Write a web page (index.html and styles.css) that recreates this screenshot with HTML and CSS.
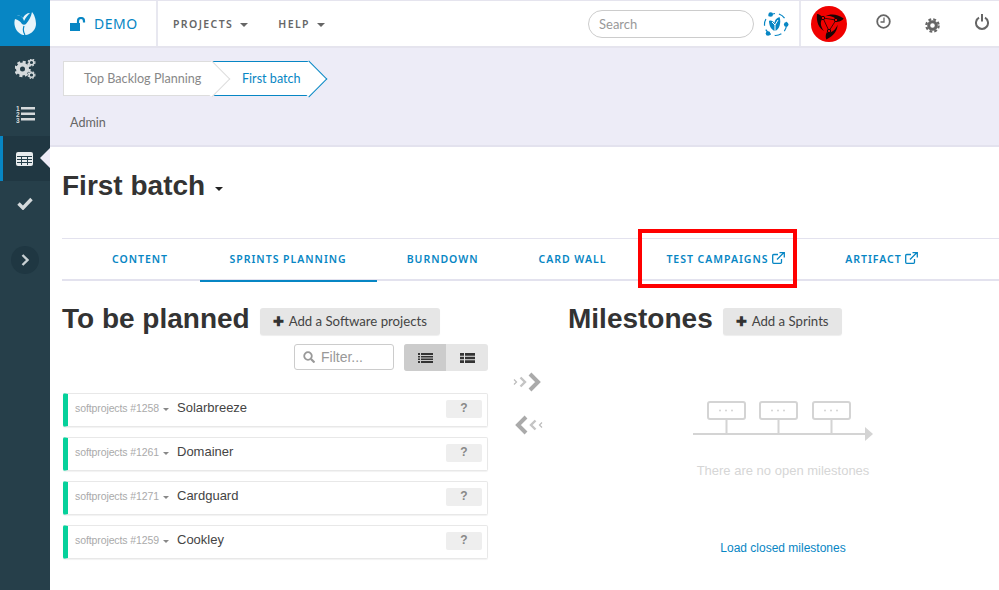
FILE: index.html
```html
<!DOCTYPE html>
<html lang="en">
<head>
<meta charset="utf-8">
<title>First batch</title>
<link rel="stylesheet" href="styles.css">
</head>
<body>
<div class="app">
  <aside class="sidebar">
    <a class="logo">
      <svg width="22" height="23" viewBox="0 0 22 23"><path fill="#e8f4fa" d="M1 7C-1 13 2 21 9 23h3c6-1 10-6 10-11 0-5-2-10-4-12-1 5-3 8-6 12-1 1-3 1-4 0C6 9 4 8 1 7z"/><path fill="#e8f4fa" d="M3 4c3-1 6 1 7 5 2-4 4-6 6-8-3 0-6 2-7 5-2-2-4-3-6-2z"/><path fill="none" stroke="#0786c4" stroke-width="1.200" d="M10 14c-1 3-1 6 1 9"/></svg>
    </a>
    <a class="side-item">
      <svg width="21" height="20" viewBox="0 0 21 20"><circle class="g-ring" cx="7.500" cy="10" r="4.500" stroke-width="4"/><circle class="g-teeth" cx="7.500" cy="10" r="7" stroke-width="2.500" stroke-dasharray="3 2.500"/><circle class="g-ring" cx="16.500" cy="3.500" r="2.300" stroke-width="1.400"/><circle class="g-teeth" cx="16.500" cy="3.500" r="3.400" stroke-width="1.200" stroke-dasharray="1.600 1.200"/><circle class="g-ring" cx="16.500" cy="16" r="2.300" stroke-width="1.400"/><circle class="g-teeth" cx="16.500" cy="16" r="3.400" stroke-width="1.200" stroke-dasharray="1.600 1.200"/></svg>
    </a>
    <a class="side-item">
      <svg width="19" height="18" viewBox="0 0 19 18"><path fill="#d5dadc" d="M5 2h14v2.600H5zM5 7.500h14v2.600H5zM5 13h14v2.600H5z"/><text class="num" x="0" y="5.500">1</text><text class="num" x="0" y="11.500">2</text><text class="num" x="0" y="17.500">3</text></svg>
    </a>
    <a class="side-item side-active">
      <svg width="17" height="14" viewBox="0 0 17 14"><rect width="17" height="14" rx="2" fill="#e8ecee"/><path fill="none" stroke="#26404b" stroke-width="1" d="M1 4.500h15M1 7.500h15M1 10.500h15M5.500 4.500v8.500M11.500 4.500v8.500"/></svg>
    </a>
    <a class="side-item">
      <svg width="16" height="13" viewBox="0 0 16 13"><path fill="none" stroke="#d5dadc" stroke-width="3.400" d="M1.500 6.500l4.500 4.500 8.500-9"/></svg>
    </a>
    <a class="side-expand">
      <svg width="8" height="12" viewBox="0 0 8 12"><path fill="none" stroke="#c8d0d3" stroke-width="2.400" d="M1.500 1l5 5-5 5"/></svg>
    </a>
  </aside>
  <div class="main">
    <header class="topbar">
      <a class="brand">
        <svg width="16" height="14" viewBox="0 0 16 14"><path fill="#0786c4" d="M0 6h10v8H0z"/><path fill="none" stroke="#0786c4" stroke-width="2.200" d="M8 6V4a3 3 0 0 1 6 0v1.500"/></svg>
        <span>DEMO</span>
      </a>
      <nav class="topnav">
        <a>PROJECTS <i class="caret"></i></a>
        <a>HELP <i class="caret"></i></a>
      </nav>
      <div class="top-right">
        <div class="search">Search</div>
        <svg class="planet" width="27" height="27" viewBox="0 0 27 27"><circle cx="13.500" cy="13.500" r="11" fill="none" stroke="#0786c4" stroke-width="1.200" stroke-dasharray="7 4"/><circle cx="8.700" cy="3.500" r="2.300" fill="#0786c4"/><circle cx="24.200" cy="13.500" r="2.300" fill="#0786c4"/><circle cx="6" cy="22.500" r="2.300" fill="#0786c4"/><path fill="#0786c4" d="M7 10c2-1 4 0 5.500 2 0-3 2-5 5-6 2 5 0 13-4.500 14C9 19 7 14 7 10z"/><path stroke="#fff" stroke-width="1" fill="none" d="M13 20v-6M10 11c1 1 2 2 3 3M16 9l-3 5"/></svg>
        <div class="top-divider"><svg width="36" height="36" viewBox="0 0 36 36"><circle cx="18" cy="18" r="18" fill="#f00100"/><g fill="#1a0505"><path d="M12 12C9 15 9 20 13 25 8 22 5 16 6 8c2 0 5 2 6 4z"/><path transform="rotate(120 18 18)" d="M12 12C9 15 9 20 13 25 8 22 5 16 6 8c2 0 5 2 6 4z"/><path transform="rotate(240 18 18)" d="M12 12C9 15 9 20 13 25 8 22 5 16 6 8c2 0 5 2 6 4z"/></g><path fill="none" stroke="#1a0505" stroke-width="0.800" d="M12 12l13 2-7 11z"/><circle cx="12" cy="12" r="1.700" fill="#f00100" stroke="#1a0505"/><circle cx="25" cy="14" r="1.700" fill="#f00100" stroke="#1a0505"/><circle cx="18" cy="25" r="1.700" fill="#f00100" stroke="#1a0505"/></svg></div>
        <svg class="ic-clock" width="15" height="15" viewBox="0 0 15 15"><circle cx="7.500" cy="7.500" r="6.300" fill="none" stroke="#666" stroke-width="1.800"/><path fill="none" stroke="#666" stroke-width="1.300" d="M8 3.500V8H4.500"/></svg>
        <svg class="ic-gear" width="15" height="15" viewBox="0 0 15 15"><circle cx="7.500" cy="7.500" r="3.800" fill="none" stroke="#666" stroke-width="3"/><circle cx="7.500" cy="7.500" r="6.200" fill="none" stroke="#666" stroke-width="2.200" stroke-dasharray="2.800 2.070"/></svg>
        <svg class="ic-power" width="14" height="16" viewBox="0 0 14 16"><path fill="none" stroke="#666" stroke-width="2" d="M4 3.700a6 6 0 1 0 6 0"/><path fill="none" stroke="#666" stroke-width="2" d="M7 0v7.500"/></svg>
      </div>
    </header>
    <section class="band">
      <div class="crumbs">
        <a class="crumb crumb-first">Top Backlog Planning</a>
        <a class="crumb crumb-cur">First batch</a>
      </div>
      <div class="band-admin">Admin</div>
    </section>
    <section class="page">
      <h1 class="page-title">First batch <i class="caret caret-dark"></i></h1>
      <nav class="tabs">
        <a class="tab tab-first">CONTENT</a>
        <a class="tab tab-active">SPRINTS PLANNING</a>
        <a class="tab">BURNDOWN</a>
        <a class="tab">CARD WALL</a>
        <a class="tab tab-marked">TEST CAMPAIGNS <svg class="ext" width="13" height="12" viewBox="0 0 13 12"><path fill="none" stroke="#0786c4" stroke-width="1.300" d="M9.500 7v3.300a1 1 0 0 1-1 1H1.700a1 1 0 0 1-1-1V3.500a1 1 0 0 1 1-1H6M5 7.500L11.500 1M7.500.7h4.800v4.800"/></svg><span class="mark"></span></a>
        <a class="tab">ARTIFACT <svg class="ext" width="13" height="12" viewBox="0 0 13 12"><path fill="none" stroke="#0786c4" stroke-width="1.300" d="M9.500 7v3.300a1 1 0 0 1-1 1H1.700a1 1 0 0 1-1-1V3.500a1 1 0 0 1 1-1H6M5 7.500L11.500 1M7.500.7h4.800v4.800"/></svg></a>
      </nav>
      <div class="planning">
        <div class="col-left">
          <div class="col-head">
            <h2>To be planned</h2>
            <a class="btn"><b class="plus">✚</b> Add a Software projects</a>
          </div>
          <div class="tools">
            <div class="filter">
              <svg width="12" height="12" viewBox="0 0 12 12"><circle cx="5" cy="5" r="3.800" fill="none" stroke="#999" stroke-width="1.800"/><path stroke="#999" stroke-width="2.200" d="M8 8l3.500 3.500"/></svg>
              <span>Filter...</span>
            </div>
            <div class="toggle">
              <a class="toggle-on"><svg width="15" height="12" viewBox="0 0 15 12"><path fill="#333" d="M0 1h2v2H0zM3 1h12v2H3zM0 4h2v1.500H0zM3 4h12v1.500H3zM0 6.500h2V8H0zM3 6.500h12V8H3zM0 9h2v2H0zM3 9h12v2H3z"/></svg></a>
              <a><svg width="15" height="12" viewBox="0 0 15 12"><path fill="#333" d="M0 1h4v2.800H0zM5 1h10v2.800H5zM0 4.700h4v2.600H0zM5 4.700h10v2.600H5zM0 8.200h4V11H0zM5 8.200h10V11H5z"/></svg></a>
            </div>
          </div>
          <ul class="cards">
            <li class="card"><span class="card-id">softprojects #1258 <i class="caret caret-small"></i></span><span class="card-name">Solarbreeze</span><b class="card-q">?</b></li>
            <li class="card"><span class="card-id">softprojects #1261 <i class="caret caret-small"></i></span><span class="card-name">Domainer</span><b class="card-q">?</b></li>
            <li class="card"><span class="card-id">softprojects #1271 <i class="caret caret-small"></i></span><span class="card-name">Cardguard</span><b class="card-q">?</b></li>
            <li class="card"><span class="card-id">softprojects #1259 <i class="caret caret-small"></i></span><span class="card-name">Cookley</span><b class="card-q">?</b></li>
          </ul>
        </div>
        <div class="col-mid">
          <svg width="30" height="20" viewBox="0 0 30 20"><g fill="none"><path stroke="#bbb" stroke-width="1.200" d="M1 7.500L3.500 10 1 12.500"/><path stroke-width="2.400" stroke="#c4c4c4" d="M7.500 5.500L12 10l-4.500 4.500"/><path stroke-width="4" stroke="#aaa" d="M17 2l8 8-8 8"/></g></svg>
          <svg width="30" height="20" viewBox="0 0 30 20"><g fill="none"><path stroke="#bbb" stroke-width="1.200" d="M29 7.500L26.500 10l2.500 2.500"/><path stroke-width="2.400" stroke="#c4c4c4" d="M22.500 5.500L18 10l4.500 4.500"/><path stroke-width="4" stroke="#aaa" d="M13 2l-8 8 8 8"/></g></svg>
        </div>
        <div class="col-right">
          <div class="col-head">
            <h2>Milestones</h2>
            <a class="btn"><b class="plus">✚</b> Add a Sprints</a>
          </div>
          <div class="empty">
            <svg width="181" height="41" viewBox="0 0 181 41"><g fill="none" stroke="#d4d4d4" stroke-width="2"><rect x="15" y="1" width="37" height="17" rx="2"/><rect x="67" y="1" width="37" height="17" rx="2"/><rect x="120" y="1" width="37" height="17" rx="2"/><path d="M33.500 18v15M85.500 18v15M138.500 18v15M0 33h173"/></g><path fill="#d4d4d4" d="M172 26l8 7-8 7z"/><g fill="#d4d4d4"><circle cx="27" cy="9.500" r="1"/><circle cx="33" cy="9.500" r="1"/><circle cx="39" cy="9.500" r="1"/><circle cx="79" cy="9.500" r="1"/><circle cx="85" cy="9.500" r="1"/><circle cx="91" cy="9.500" r="1"/><circle cx="132" cy="9.500" r="1"/><circle cx="138" cy="9.500" r="1"/><circle cx="144" cy="9.500" r="1"/></g></svg>
            <p class="empty-text">There are no open milestones</p>
            <a class="load">Load closed milestones</a>
          </div>
        </div>
      </div>
    </section>
  </div>
</div>
</body>
</html>
```

FILE: styles.css
```css
* { box-sizing: border-box; }
html, body { margin: 0; height: 100%; overflow: hidden; background: #fff; }
body { font-family: Lato, "Noto Sans", sans-serif; color: #333; }
h1, h2, p, ul { margin: 0; padding: 0; }
ul { list-style: none; }

.app { display: flex; width: 999px; height: 590px; }

/* Sidebar */
.sidebar { width: 50px; flex: none; background: #263f4a; display: flex; flex-direction: column; }
.logo { height: 46px; background: #0786c4; display: flex; align-items: center; justify-content: center; }
.side-item { height: 45px; display: flex; align-items: center; justify-content: center; position: relative; }
.g-ring { fill: none; stroke: #d5dadc; }
.g-teeth { fill: none; stroke: #d5dadc; }
.num { font: bold 6.500px "Liberation Sans", sans-serif; fill: #d5dadc; }
.side-active { background: #203742; border-left: 3px solid #0786c4; padding-right: 4px; }
.side-active::after { content: ""; position: absolute; right: 0; top: 12px; border: 10px solid transparent; border-left-width: 0; border-right-color: #edecf7; }
.side-expand { width: 28px; height: 28px; margin: 20px 0 0 11px; border-radius: 50%; background: #1f3742; display: flex; align-items: center; justify-content: center; }

.main { flex: 1; min-width: 0; display: flex; flex-direction: column; }

/* Top bar */
.topbar { height: 48px; flex: none; border-top: 1px solid #e5e4ee; border-bottom: 2px solid #e5e4ee; display: flex; align-items: stretch; background: #fff; }
.brand { width: 108px; border-right: 2px solid #e8e8f0; padding: 0 0 0 20px; display: flex; align-items: center; gap: 8px; color: #0786c4; font-family: "Noto Sans", sans-serif; font-size: 14px; letter-spacing: 0.500px; }
.topnav { display: flex; align-items: center; gap: 30px; padding-left: 15px; color: #666; font-family: "Noto Sans", sans-serif; font-size: 10.500px; font-weight: 600; letter-spacing: 1.400px; }
.caret { display: inline-block; width: 0; height: 0; margin-left: 3px; border: 4px solid transparent; border-top-color: #666; border-bottom-width: 0; vertical-align: middle; }
.top-right { margin-left: auto; display: flex; align-items: center; position: relative; padding-right: 10px; }
.search { width: 166px; height: 28px; margin-top: 1px; border: 1px solid #ccc; border-radius: 14px; padding: 0 10px; font-size: 13px; line-height: 26px; color: #999; }
.planet { margin-left: 8px; margin-top: 1px; }
.top-divider { height: 100%; margin-left: 10px; padding: 1px 0 0 10px; border-left: 2px solid #e8e8f0; display: flex; align-items: center; }
.ic-clock { margin: 0 0 5px 29px; }
.ic-gear { margin: 3px 0 0 34px; }
.ic-power { margin: 0 0 3px 35px; }

/* Breadcrumb band */
.band { height: 99px; flex: none; background: #edecf7; border-bottom: 2px solid #e3e2ee; padding: 13px 0 0 13px; }
.crumbs { display: flex; height: 35px; }
.crumb { position: relative; display: block; height: 35px; line-height: 33px; font-size: 12.600px; background: #fff; }
.crumb::after { content: ""; position: absolute; right: -12.500px; width: 25px; height: 25px; transform: rotate(45deg); background: #fff; z-index: -1; }
.crumb-first { width: 149px; padding-left: 20px; color: #888; border: 1px solid #ddd; border-right: 0; z-index: 2; }
.crumb-first::after { border-top: 1px solid #ddd; border-right: 1px solid #ddd; top: 4px; }
.crumb-cur { width: 97px; padding-left: 30px; color: #0786c4; border: 1px solid #0786c4; border-width: 1px 0; z-index: 1; }
.crumb-cur::after { border-top: 1px solid #0786c4; border-right: 1px solid #0786c4; top: 4px; }
.band-admin { margin: 16px 0 0 7px; font-size: 12.600px; line-height: 22px; color: #666; }

/* Page */
.page { flex: 1; padding: 0 0 0 12px; background: #fff; }
.page-title { height: 91px; padding-top: 22px; font: bold 28px/34px "Liberation Sans", sans-serif; color: #333; }
.caret-dark { margin-left: 2px; border-top-color: #222; vertical-align: 4px; }

.tabs { display: flex; height: 43px; padding-left: 20px; border-top: 1px solid #e3e2ee; border-bottom: 2px solid #e3e2ee; }
.tab { position: relative; padding: 0 30px; line-height: 41px; height: 41px; font-family: "Noto Sans", sans-serif; font-size: 10.500px; font-weight: 600; letter-spacing: 0.980px; color: #0786c4; white-space: nowrap; }
.tab-first { padding-right: 31.500px; }
.tab-active { border-bottom: 2px solid #0786c4; margin-bottom: -2px; height: 43px; }
.ext { vertical-align: -1px; }
.mark { position: absolute; left: 2px; top: -10px; width: 159px; height: 59px; border: 4px solid #f00; }

.planning { display: flex; padding-top: 22px; }
.col-left { width: 426px; flex: none; }
.col-mid { width: 80px; flex: none; display: flex; flex-direction: column; align-items: flex-start; gap: 23px; padding: 69px 0 0 25px; }
.col-right { flex: 1; }
.col-head { display: flex; align-items: center; height: 34px; gap: 10px; white-space: nowrap; }
.col-head h2 { font: bold 28px/34px "Liberation Sans", sans-serif; color: #333; margin-top: -2px; }
.btn { display: block; height: 27px; line-height: 27px; margin-top: 3px; padding: 0 13px; background: #e6e6e6; border-radius: 3px; font-size: 13.200px; color: #444; box-shadow: 0 1px 1px #eee; }
.plus { font-size: 13px; color: #333; margin-right: 2px; }

.tools { display: flex; justify-content: flex-end; gap: 10px; margin-top: 7px; height: 27px; }
.filter { width: 100px; height: 26px; border: 1px solid #ccc; border-radius: 3px; display: flex; align-items: center; gap: 6px; padding-left: 8px; font: 14px "Liberation Sans", sans-serif; color: #999; }
.toggle { display: flex; width: 84px; height: 27px; border-radius: 3px; overflow: hidden; background: #e6e6e6; }
.toggle a { width: 42px; display: flex; align-items: center; justify-content: center; }
.toggle .toggle-on { background: #ccc; }

.cards { margin-top: 22px; display: flex; flex-direction: column; gap: 10px; }
.card { height: 34px; border: 1px solid #e8e8e8; border-left: 5px solid #06d19b; margin-left: 1px; border-radius: 2px; box-shadow: 0 1px 1px #f2f2f2; display: flex; align-items: flex-start; position: relative; font-family: "Liberation Sans", sans-serif; padding: 5px 5px 0 7px; }
.card-id { width: 102px; font-size: 10.500px; line-height: 18px; color: #aaa; white-space: nowrap; letter-spacing: -0.100px; }
.card-name { font-size: 13px; line-height: 18px; color: #444; }
.card-q { margin-left: auto; width: 36px; height: 18px; margin-top: 1px; background: #eee; border-radius: 2px; text-align: center; font-size: 12px; line-height: 17px; color: #888; }
.caret-small { border-width: 3px; border-bottom-width: 0; margin-left: 1px; border-top-color: #888; }

.empty { display: flex; flex-direction: column; align-items: center; width: 430px; margin-top: 64px; font-family: "Liberation Sans", sans-serif; }
.empty-text { margin-top: 21px; font-size: 13px; line-height: 16px; color: #d6d6d6; }
.load { margin-top: 61px; font-size: 12px; line-height: 16px; color: #0786c4; }
```
